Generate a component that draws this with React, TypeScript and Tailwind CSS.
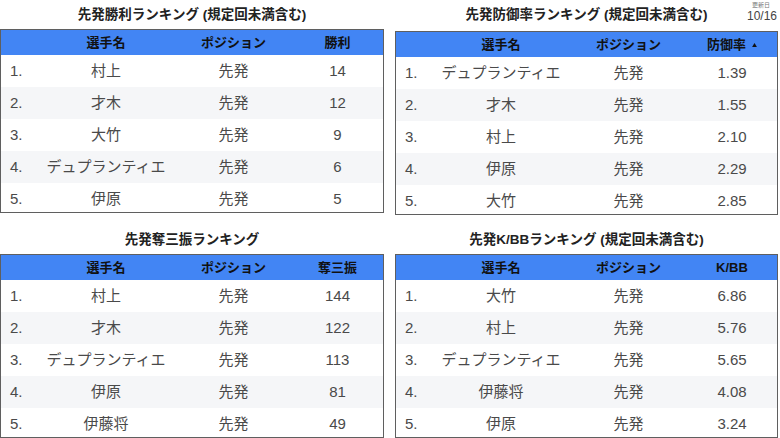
const font = {
  fontFamily: '"Liberation Sans", "Noto Sans CJK JP", sans-serif',
};

type Row = { name: string; value: string };

const tables: {
  title: string;
  col: string;
  sort?: boolean;
  rows: Row[];
}[] = [
  {
    title: "先発勝利ランキング (規定回未満含む)",
    col: "勝利",
    rows: [
      { name: "村上", value: "14" },
      { name: "才木", value: "12" },
      { name: "大竹", value: "9" },
      { name: "デュプランティエ", value: "6" },
      { name: "伊原", value: "5" },
    ],
  },
  {
    title: "先発防御率ランキング (規定回未満含む)",
    col: "防御率",
    sort: true,
    rows: [
      { name: "デュプランティエ", value: "1.39" },
      { name: "才木", value: "1.55" },
      { name: "村上", value: "2.10" },
      { name: "伊原", value: "2.29" },
      { name: "大竹", value: "2.85" },
    ],
  },
  {
    title: "先発奪三振ランキング",
    col: "奪三振",
    rows: [
      { name: "村上", value: "144" },
      { name: "才木", value: "122" },
      { name: "デュプランティエ", value: "113" },
      { name: "伊原", value: "81" },
      { name: "伊藤将", value: "49" },
    ],
  },
  {
    title: "先発K/BBランキング (規定回未満含む)",
    col: "K/BB",
    rows: [
      { name: "大竹", value: "6.86" },
      { name: "村上", value: "5.76" },
      { name: "デュプランティエ", value: "5.65" },
      { name: "伊藤将", value: "4.08" },
      { name: "伊原", value: "3.24" },
    ],
  },
];

const cols = "grid grid-cols-[36px_138px_117px_1fr]";

const Ranking = ({ t, titleClass }: { t: (typeof tables)[number]; titleClass: string }) => (
  <div className="flex flex-col">
    <div className={`${titleClass} text-center text-[13.5px] leading-[16px] font-bold text-[#222]`}>
      {t.title}
    </div>
    <div className="h-[184px] overflow-hidden border border-[#5f5f5f] bg-white">
      <div className={`${cols} h-[25px] items-center bg-[#4285f4] text-[13px] font-bold text-[#111]`}>
        <span />
        <span className="text-center">選手名</span>
        <span className="text-center">ポジション</span>
        <span className="flex items-center justify-center gap-[6px]">
          {t.col}
          {t.sort && (
            <svg width="5" height="4" viewBox="0 0 6 5">
              <path d="M3 0L6 5H0z" fill="#111" />
            </svg>
          )}
        </span>
      </div>
      {t.rows.map((r, i) => (
        <div
          key={i}
          className={`${cols} h-[32px] shrink-0 items-center text-[15px] text-[#4a4a4a] ${
            i % 2 === 1 ? "bg-[#f5f6f8]" : "bg-white"
          }`}
        >
          <span className="pl-[9px]">{i + 1}.</span>
          <span className="text-center">{r.name}</span>
          <span className="text-center">先発</span>
          <span className="text-center">{r.value}</span>
        </div>
      ))}
    </div>
  </div>
);

export default function App() {
  return (
    <div style={font} className="relative h-[438px] w-[780px] overflow-hidden bg-white">
      <div className="absolute right-[3px] top-[1px] flex flex-col items-end">
        <span className="mr-[7px] text-[6px] leading-[8px] text-[#777]">更新日</span>
        <span className="text-[12px] leading-[14px] text-[#444]">10/16</span>
      </div>
      <div className="grid grid-cols-[384px_383px] gap-x-[11px]">
        <div className="h-[219px]">
          <Ranking t={tables[0]} titleClass="h-[29px] pt-[7px]" />
        </div>
        <div className="h-[219px]">
          <Ranking t={tables[1]} titleClass="h-[31px] pt-[7px]" />
        </div>
        <Ranking t={tables[2]} titleClass="h-[35px] pt-[13px]" />
        <Ranking t={tables[3]} titleClass="h-[35px] pt-[13px]" />
      </div>
    </div>
  );
}
